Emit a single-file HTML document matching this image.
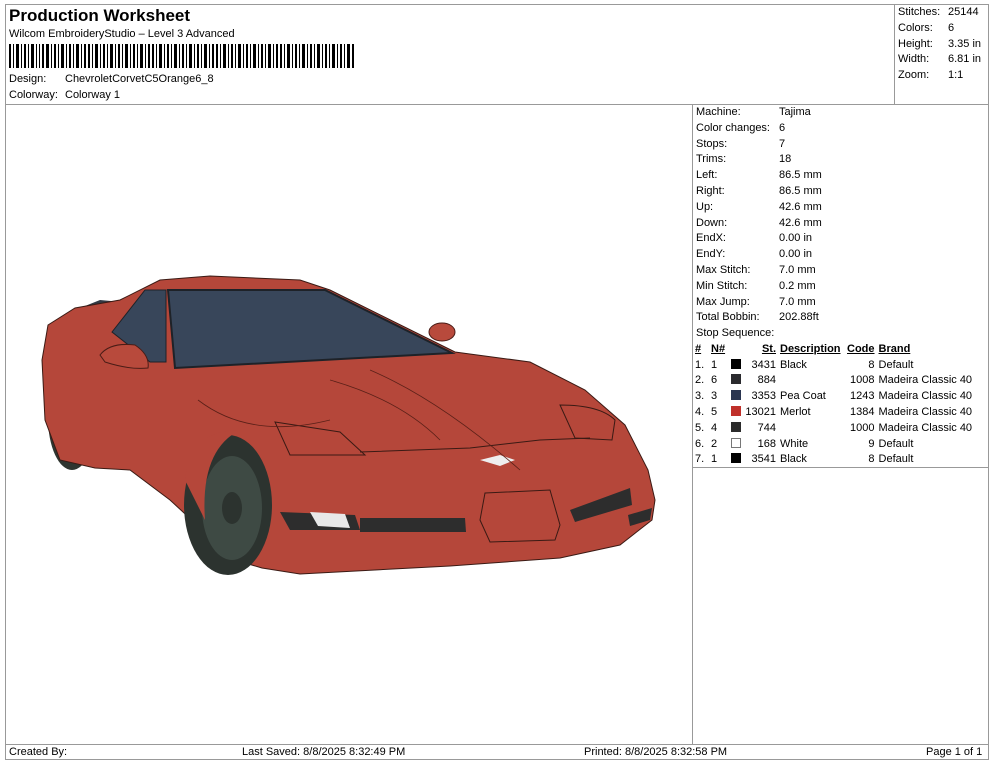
<!DOCTYPE html>
<html><head><meta charset="utf-8"><style>
*{margin:0;padding:0;box-sizing:border-box}
body{width:990px;height:762px;background:#fff;font-family:"Liberation Sans",Arial,sans-serif;color:#000;position:relative;overflow:hidden;font-size:11px}
.a{position:absolute;white-space:nowrap}
.ln{position:absolute;background:#999}
table{border-collapse:collapse;font-size:11px}
td{padding:0;height:15.8px;white-space:nowrap}
.sw{display:inline-block;width:10px;height:10px;vertical-align:-1px}
</style></head><body>
<div class="ln" style="left:5px;top:4px;width:984px;height:1px"></div>
<div class="ln" style="left:5px;top:4px;width:1px;height:756px"></div>
<div class="ln" style="left:988px;top:4px;width:1px;height:756px"></div>
<div class="ln" style="left:5px;top:759px;width:984px;height:1px"></div>
<div class="ln" style="left:5px;top:104px;width:984px;height:1px"></div>
<div class="ln" style="left:894px;top:4px;width:1px;height:100px"></div>
<div class="ln" style="left:692px;top:104px;width:1px;height:641px"></div>
<div class="ln" style="left:692px;top:467px;width:297px;height:1px"></div>
<div class="ln" style="left:5px;top:744px;width:984px;height:1px"></div>

<div class="a" style="left:9px;top:6px;font-size:17px;font-weight:bold">Production Worksheet</div>
<div class="a" style="left:9px;top:28px">Wilcom EmbroideryStudio – Level 3 Advanced</div>
<svg class="a" style="left:9px;top:44px" width="346" height="24">
<g fill="#000">
<rect x="0" y="0" width="2" height="24"/><rect x="4" y="0" width="1" height="24"/><rect x="7" y="0" width="3" height="24"/><rect x="12" y="0" width="1" height="24"/><rect x="15" y="0" width="2" height="24"/><rect x="19" y="0" width="1" height="24"/><rect x="22" y="0" width="3" height="24"/><rect x="27" y="0" width="1" height="24"/><rect x="30" y="0" width="1" height="24"/><rect x="33" y="0" width="2" height="24"/><rect x="37" y="0" width="3" height="24"/><rect x="42" y="0" width="1" height="24"/><rect x="45" y="0" width="2" height="24"/><rect x="49" y="0" width="1" height="24"/><rect x="52" y="0" width="3" height="24"/><rect x="57" y="0" width="1" height="24"/><rect x="60" y="0" width="2" height="24"/><rect x="64" y="0" width="1" height="24"/><rect x="67" y="0" width="3" height="24"/><rect x="72" y="0" width="1" height="24"/><rect x="75" y="0" width="2" height="24"/><rect x="79" y="0" width="2" height="24"/><rect x="83" y="0" width="1" height="24"/><rect x="86" y="0" width="3" height="24"/><rect x="91" y="0" width="1" height="24"/><rect x="94" y="0" width="2" height="24"/><rect x="98" y="0" width="1" height="24"/><rect x="101" y="0" width="3" height="24"/><rect x="106" y="0" width="1" height="24"/><rect x="109" y="0" width="2" height="24"/><rect x="113" y="0" width="1" height="24"/><rect x="116" y="0" width="3" height="24"/><rect x="121" y="0" width="1" height="24"/><rect x="124" y="0" width="2" height="24"/><rect x="128" y="0" width="1" height="24"/><rect x="131" y="0" width="3" height="24"/><rect x="136" y="0" width="1" height="24"/><rect x="139" y="0" width="2" height="24"/><rect x="143" y="0" width="2" height="24"/><rect x="147" y="0" width="1" height="24"/><rect x="150" y="0" width="3" height="24"/><rect x="155" y="0" width="1" height="24"/><rect x="158" y="0" width="2" height="24"/><rect x="162" y="0" width="1" height="24"/><rect x="165" y="0" width="3" height="24"/><rect x="170" y="0" width="1" height="24"/><rect x="173" y="0" width="2" height="24"/><rect x="177" y="0" width="1" height="24"/><rect x="180" y="0" width="3" height="24"/><rect x="185" y="0" width="1" height="24"/><rect x="188" y="0" width="2" height="24"/><rect x="192" y="0" width="1" height="24"/><rect x="195" y="0" width="3" height="24"/><rect x="200" y="0" width="1" height="24"/><rect x="203" y="0" width="2" height="24"/><rect x="207" y="0" width="2" height="24"/><rect x="211" y="0" width="1" height="24"/><rect x="214" y="0" width="3" height="24"/><rect x="219" y="0" width="1" height="24"/><rect x="222" y="0" width="2" height="24"/><rect x="226" y="0" width="1" height="24"/><rect x="229" y="0" width="3" height="24"/><rect x="234" y="0" width="1" height="24"/><rect x="237" y="0" width="2" height="24"/><rect x="241" y="0" width="1" height="24"/><rect x="244" y="0" width="3" height="24"/><rect x="249" y="0" width="1" height="24"/><rect x="252" y="0" width="2" height="24"/><rect x="256" y="0" width="1" height="24"/><rect x="259" y="0" width="3" height="24"/><rect x="264" y="0" width="1" height="24"/><rect x="267" y="0" width="2" height="24"/><rect x="271" y="0" width="2" height="24"/><rect x="275" y="0" width="1" height="24"/><rect x="278" y="0" width="3" height="24"/><rect x="283" y="0" width="1" height="24"/><rect x="286" y="0" width="2" height="24"/><rect x="290" y="0" width="1" height="24"/><rect x="293" y="0" width="3" height="24"/><rect x="298" y="0" width="1" height="24"/><rect x="301" y="0" width="2" height="24"/><rect x="305" y="0" width="1" height="24"/><rect x="308" y="0" width="3" height="24"/><rect x="313" y="0" width="1" height="24"/><rect x="316" y="0" width="2" height="24"/><rect x="320" y="0" width="1" height="24"/><rect x="323" y="0" width="3" height="24"/><rect x="328" y="0" width="1" height="24"/><rect x="331" y="0" width="2" height="24"/><rect x="335" y="0" width="1" height="24"/><rect x="338" y="0" width="3" height="24"/><rect x="343" y="0" width="2" height="24"/>
</g></svg>
<div class="a" style="left:9px;top:73px">Design:</div><div class="a" style="left:65px;top:73px">ChevroletCorvetC5Orange6_8</div>
<div class="a" style="left:9px;top:89px">Colorway:</div><div class="a" style="left:65px;top:89px">Colorway 1</div>

<div class="a" style="left:898px;top:5px;line-height:15.8px">Stitches:<br>Colors:<br>Height:<br>Width:<br>Zoom:</div>
<div class="a" style="left:948px;top:5px;line-height:15.8px">25144<br>6<br>3.35 in<br>6.81 in<br>1:1</div>

<div class="a" style="left:696px;top:105px;line-height:15.8px">Machine:<br>Color changes:<br>Stops:<br>Trims:<br>Left:<br>Right:<br>Up:<br>Down:<br>EndX:<br>EndY:<br>Max Stitch:<br>Min Stitch:<br>Max Jump:<br>Total Bobbin:<br>Stop Sequence:</div>
<div class="a" style="left:779px;top:105px;line-height:15.8px">Tajima<br>6<br>7<br>18<br>86.5 mm<br>86.5 mm<br>42.6 mm<br>42.6 mm<br>0.00 in<br>0.00 in<br>7.0 mm<br>0.2 mm<br>7.0 mm<br>202.88ft</div>

<table class="a" style="left:695px;top:341px">
<tr style="font-weight:bold;text-decoration:underline"><td style="width:16px">#</td><td style="width:20px">N#</td><td style="width:10px"></td><td style="width:35px;text-align:right">St.</td><td style="width:62px;padding-left:4px">Description</td><td style="width:34px;text-align:right">Code</td><td style="padding-left:4px">Brand</td></tr>
<tr><td>1.</td><td>1</td><td><span class="sw" style="background:#000"></span></td><td style="text-align:right">3431</td><td style="padding-left:4px">Black</td><td style="text-align:right">8</td><td style="padding-left:4px">Default</td></tr>
<tr><td>2.</td><td>6</td><td><span class="sw" style="background:#2a2a2e"></span></td><td style="text-align:right">884</td><td></td><td style="text-align:right">1008</td><td style="padding-left:4px">Madeira Classic 40</td></tr>
<tr><td>3.</td><td>3</td><td><span class="sw" style="background:#2a3550"></span></td><td style="text-align:right">3353</td><td style="padding-left:4px">Pea Coat</td><td style="text-align:right">1243</td><td style="padding-left:4px">Madeira Classic 40</td></tr>
<tr><td>4.</td><td>5</td><td><span class="sw" style="background:#c0302a"></span></td><td style="text-align:right">13021</td><td style="padding-left:4px">Merlot</td><td style="text-align:right">1384</td><td style="padding-left:4px">Madeira Classic 40</td></tr>
<tr><td>5.</td><td>4</td><td><span class="sw" style="background:#2b2b2b"></span></td><td style="text-align:right">744</td><td></td><td style="text-align:right">1000</td><td style="padding-left:4px">Madeira Classic 40</td></tr>
<tr><td>6.</td><td>2</td><td><span class="sw" style="border:1px solid #777"></span></td><td style="text-align:right">168</td><td style="padding-left:4px">White</td><td style="text-align:right">9</td><td style="padding-left:4px">Default</td></tr>
<tr><td>7.</td><td>1</td><td><span class="sw" style="background:#000"></span></td><td style="text-align:right">3541</td><td style="padding-left:4px">Black</td><td style="text-align:right">8</td><td style="padding-left:4px">Default</td></tr>
</table>

<svg class="a" style="left:0;top:0" width="692" height="744">
<ellipse cx="72" cy="418" rx="24" ry="52" fill="#2e3530"/>
<path d="M70 312 L100 300 L122 302 L110 320 Z" fill="#323a45"/>
<path d="M48 325 L75 308 L120 300 L160 280 L210 276 L300 280 L330 290 L455 352 L530 362 L585 390 L625 425 L648 470 L655 500 L652 520 L620 545 L560 558 L450 566 L300 574 L262 568 L235 560 L170 500 L130 470 L95 468 L60 460 L45 420 L42 360 Z" fill="#b5473a" stroke="#3a1a14" stroke-width="1"/>
<ellipse cx="228" cy="505" rx="44" ry="70" fill="#2c332f"/>
<ellipse cx="232" cy="508" rx="30" ry="52" fill="#3e4a44"/>
<ellipse cx="232" cy="508" rx="10" ry="16" fill="#2c332f"/>
<path d="M240 430 Q200 450 205 520 L185 480 Q190 430 240 430 Z" fill="#b5473a"/>
<path d="M168 290 L325 290 L452 353 L175 368 Z" fill="#38465a" stroke="#1e2228" stroke-width="2"/>
<path d="M112 332 L145 290 L166 290 L166 362 L150 362 Z" fill="#38465a" stroke="#1e2228"/>
<path d="M100 355 Q110 342 135 345 Q150 355 148 368 Q130 370 105 362 Z" fill="#b84a3c" stroke="#4a1c16"/>
<ellipse cx="442" cy="332" rx="13" ry="9" fill="#b84a3c" stroke="#4a1c16"/>
<path d="M280 512 L355 515 L360 530 L290 530 Z" fill="#2d2d2d"/>
<path d="M310 512 L345 514 L350 528 L318 526 Z" fill="#e8e8e8"/>
<path d="M360 518 L465 518 L466 532 L360 532 Z" fill="#2d2d2d"/>
<path d="M570 510 L630 488 L632 505 L575 522 Z" fill="#2d2d2d"/>
<path d="M628 515 L652 508 L650 520 L630 526 Z" fill="#2d2d2d"/>
<path d="M485 493 L550 490 L560 525 L555 540 L490 542 L480 520 Z" fill="none" stroke="#3a1a14"/>
<path d="M275 422 L340 432 L365 455 L290 455 Z" fill="none" stroke="#3a1a14"/>
<path d="M560 405 Q600 405 615 420 L612 440 L575 438 Z" fill="none" stroke="#3a1a14"/>
<path d="M360 452 L470 448 L540 440 L590 438" fill="none" stroke="#3a1a14"/>
<path d="M480 460 L500 455 L515 460 L500 466 Z" fill="#eee"/>
<path d="M198 400 Q250 440 330 420 M330 380 Q400 400 440 440 M370 370 Q440 400 520 470" fill="none" stroke="#5a2018" stroke-width="0.8"/>
</svg>

<div class="a" style="left:9px;top:746px">Created By:</div>
<div class="a" style="left:242px;top:746px">Last Saved: 8/8/2025 8:32:49 PM</div>
<div class="a" style="left:584px;top:746px">Printed: 8/8/2025 8:32:58 PM</div>
<div class="a" style="left:926px;top:746px">Page 1 of 1</div>
</body></html>
